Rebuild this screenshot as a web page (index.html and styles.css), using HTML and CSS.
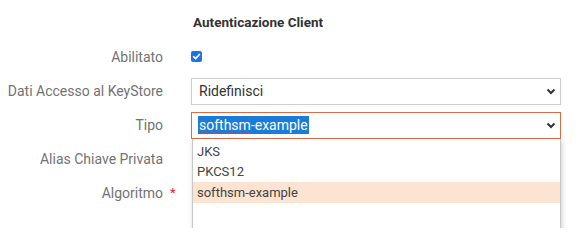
FILE: index.html
```html
<!DOCTYPE html>
<html>
<head>
<meta charset="utf-8">
<link rel="stylesheet" href="styles.css">
</head>
<body>
<div class="form">
  <div class="title-row">
    <div class="title">Autenticazione Client</div>
  </div>
  <div class="row">
    <div class="label">Abilitato</div>
    <div class="control">
      <svg class="check" width="11" height="11" viewBox="0 0 11 11"><rect x="0" y="0" width="11" height="11" rx="2" fill="#1a73e8"/><path d="M2.6 5.7 L4.6 7.6 L8.5 3.4" fill="none" stroke="#fff" stroke-width="1.6" stroke-linecap="round" stroke-linejoin="round"/></svg>
    </div>
  </div>
  <div class="row">
    <div class="label">Dati Accesso al KeyStore</div>
    <div class="control">
      <div class="select">
        <span class="value">Ridefinisci</span>
        <svg class="chev" width="10" height="7" viewBox="0 0 10 7"><path d="M1.5 1.5 L5 5 L8.5 1.5" fill="none" stroke="#333" stroke-width="2"/></svg>
      </div>
    </div>
  </div>
  <div class="row">
    <div class="label">Tipo</div>
    <div class="control">
      <div class="select focused">
        <span class="value selected"><span class="typo">softhsm</span>-example</span>
        <svg class="chev" width="10" height="7" viewBox="0 0 10 7"><path d="M1.5 1.5 L5 5 L8.5 1.5" fill="none" stroke="#333" stroke-width="2"/></svg>
      </div>
      <ul class="dropdown">
        <li>JKS</li>
        <li>PKCS12</li>
        <li class="hover">softhsm-example</li>
      </ul>
    </div>
  </div>
  <div class="row">
    <div class="label">Alias Chiave Privata</div>
    <div class="control"></div>
  </div>
  <div class="row">
    <div class="label">Algoritmo <span class="req">*</span></div>
    <div class="control"></div>
  </div>
</div>
</body>
</html>
```
FILE: styles.css
```css
html, body {
  margin: 0;
  padding: 0;
  background: #fff;
}
body {
  font-family: Roboto, "Liberation Sans", sans-serif;
  width: 586px;
  height: 228px;
  overflow: hidden;
}
.form {
  padding-top: 14px;
  display: flex;
  flex-direction: column;
  gap: 8px;
}
.title-row {
  padding-left: 193px;
  height: 22px;
}
.title {
  font-size: 13.5px;
  font-weight: 700;
  color: #333;
  line-height: 16px;
}
.row {
  display: grid;
  grid-template-columns: 163px 370px;
  column-gap: 28px;
  height: 26px;
  align-items: center;
}
.label {
  text-align: right;
  font-size: 14px;
  color: #737373;
  position: relative;
  white-space: nowrap;
}
.req {
  position: absolute;
  left: 170px;
  top: 0;
  color: #e8203a;
  font-size: 13px;
}
.control {
  position: relative;
  height: 26px;
  display: flex;
  align-items: center;
}
.check {
  display: block;
  margin-top: -2px;
}
.select {
  box-sizing: border-box;
  width: 370px;
  height: 27px;
  border: 1px solid #cfcfcf;
  background: #fff;
  display: flex;
  align-items: center;
  justify-content: space-between;
  padding: 0 4px 0 7px;
  font-size: 14px;
  color: #333;
}
.select.focused {
  border-color: #df6b48;
}
.value.selected {
  background: #1b7bd8;
  color: #fff;
  line-height: 18px;
  padding: 0 1px;
  margin-left: -1px;
}
.typo {
  text-decoration: underline wavy #e04040;
  text-decoration-thickness: 0.6px;
  text-underline-offset: 0px;
}
.chev {
  display: block;
}
.dropdown {
  position: absolute;
  left: 1px;
  top: 27px;
  width: 369px;
  height: 100px;
  box-sizing: border-box;
  margin: 0;
  padding: 3px 0 0 0;
  list-style: none;
  background: #fff;
  border: 1px solid #c8c8c8;
  border-top: none;
  box-shadow: 1px 2px 5px rgba(0,0,0,0.2);
  font-size: 13px;
  color: #444;
}
.dropdown li {
  height: 20px;
  line-height: 20px;
  padding-left: 4px;
}
.dropdown li.hover {
  background: #fde3d2;
  height: 21px;
  line-height: 21px;
}
```
